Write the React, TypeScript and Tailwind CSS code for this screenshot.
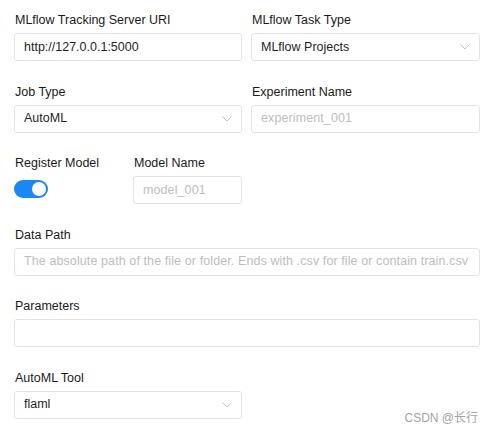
import React, { useState } from "react";

const Label: React.FC<{ children: React.ReactNode }> = ({ children }) => (
  <div className="pl-px mb-[5px] leading-[16px] text-[12.5px] text-[#1a1a1a]">{children}</div>
);

const Chevron = () => (
  <svg className="w-[10px] h-[6px] text-[#c4c4c4]" viewBox="0 0 10 6" fill="none">
    <path d="M0.8 0.8 L5 5 L9.2 0.8" stroke="currentColor" strokeWidth="1" strokeLinecap="round" strokeLinejoin="round" />
  </svg>
);

const TextBox: React.FC<{ value?: string; placeholder?: string; className?: string }> = ({
  value,
  placeholder,
  className,
}) => (
  <div
    className={`h-[28px] flex items-center px-[9px] bg-white border border-[#e3e3e3] rounded-[3px] text-[12.5px] ${
      className ?? ""
    }`}
  >
    {value ? (
      <span className="text-[#1f1f1f] whitespace-nowrap">{value}</span>
    ) : (
      <span className="text-[#bdbdbd] whitespace-nowrap tracking-[0.1px]">{placeholder}</span>
    )}
  </div>
);

const SelectBox: React.FC<{ value: string }> = ({ value }) => (
  <div className="h-[28px] flex items-center justify-between pl-[9px] pr-[9px] bg-white border border-[#e3e3e3] rounded-[3px] text-[12.5px]">
    <span className="text-[#1f1f1f]">{value}</span>
    <Chevron />
  </div>
);

export default function App() {
  const [register, setRegister] = useState<boolean>(true);

  return (
    <div
      className="relative w-[494px] h-[433px] bg-white overflow-hidden"
      style={{ fontFamily: '"Liberation Sans", Arial, "Noto Sans CJK SC", sans-serif' }}
    >
      <div className="pt-[12px] pl-[14px] w-[480px] flex flex-col gap-y-[22.5px]">
        <div className="grid grid-cols-[228px_229px] gap-x-[9px]">
          <div>
            <Label>MLflow Tracking Server URI</Label>
            <TextBox value="http://127.0.0.1:5000" />
          </div>
          <div>
            <Label>MLflow Task Type</Label>
            <SelectBox value="MLflow Projects" />
          </div>
        </div>

        <div className="grid grid-cols-[228px_229px] gap-x-[9px]">
          <div>
            <Label>Job Type</Label>
            <SelectBox value="AutoML" />
          </div>
          <div>
            <Label>Experiment Name</Label>
            <TextBox placeholder="experiment_001" />
          </div>
        </div>

        <div className="flex">
          <div className="w-[119px]">
            <Label>Register Model</Label>
            <button
              type="button"
              onClick={() => setRegister(!register)}
              className={`mt-[9px] w-[34px] h-[18px] rounded-full flex items-center px-[2px] ${
                register ? "bg-[#1b87f5] justify-end" : "bg-[#d0d0d0] justify-start"
              }`}
            >
              <span className="block w-[14px] h-[14px] rounded-full bg-white" />
            </button>
          </div>
          <div className="w-[109px]">
            <Label>Model Name</Label>
            <TextBox placeholder="model_001" />
          </div>
        </div>

        <div>
          <Label>Data Path</Label>
          <TextBox placeholder="The absolute path of the file or folder. Ends with .csv for file or contain train.csv" />
        </div>

        <div>
          <Label>Parameters</Label>
          <TextBox />
        </div>

        <div className="w-[228px]">
          <Label>AutoML Tool</Label>
          <SelectBox value="flaml" />
        </div>
      </div>

      <div className="absolute right-[16px] top-[410px] text-[12px] leading-[16px] text-[#a3a3a3]">
        CSDN @长行
      </div>
    </div>
  );
}
